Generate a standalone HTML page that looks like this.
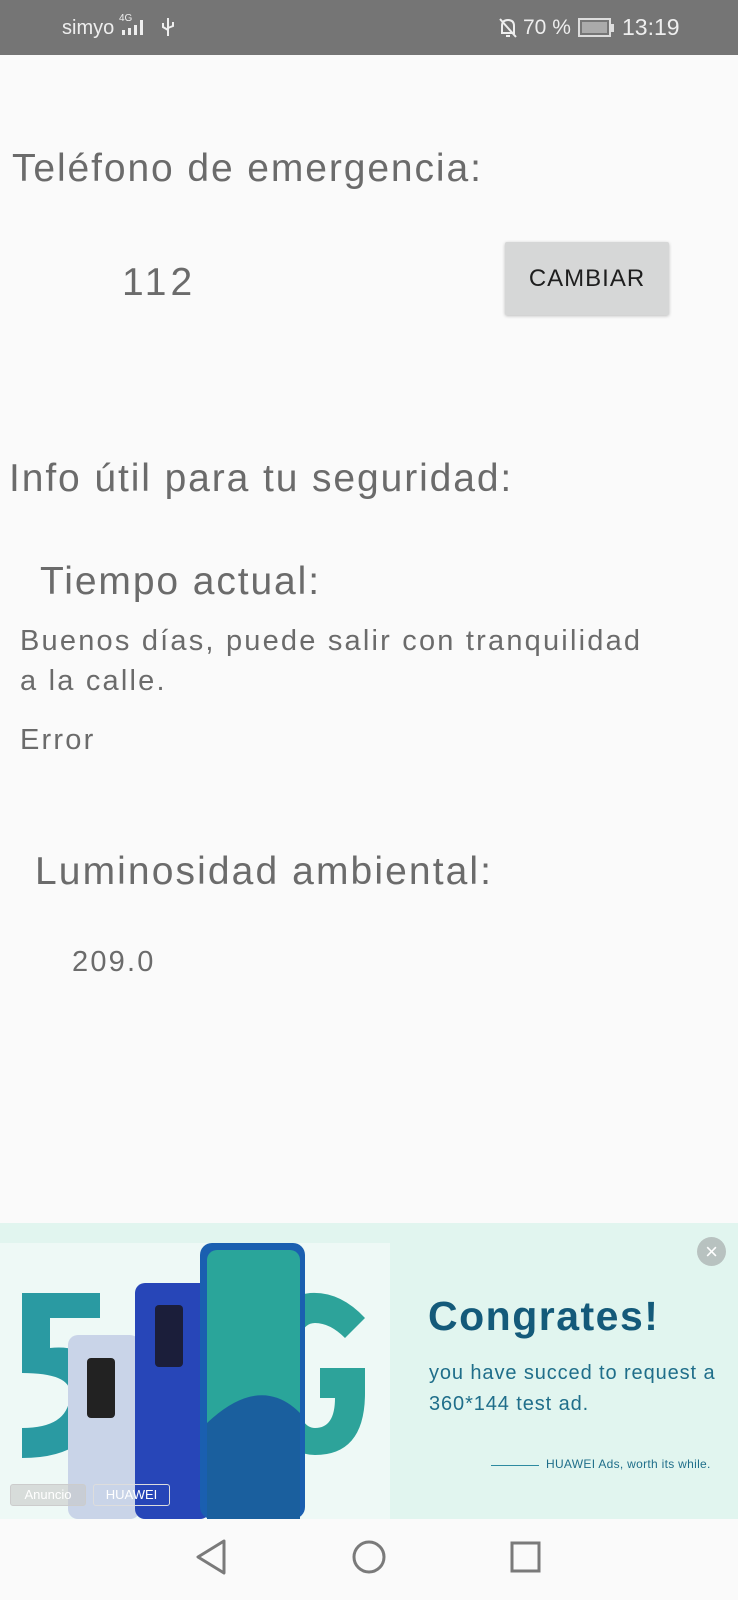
<!DOCTYPE html>
<html><head><meta charset="utf-8">
<style>
*{margin:0;padding:0;box-sizing:border-box}
body{width:738px;height:1600px;background:#fafafa;font-family:"Liberation Sans",sans-serif;position:relative;overflow:hidden;color:#6b6b6b}
.t{position:absolute;white-space:nowrap;line-height:1}
.b{font-size:39px;letter-spacing:1.9px}
.s{font-size:29px;letter-spacing:2.2px}
#sb{position:absolute;left:0;top:0;width:738px;height:55px;background:#757575;color:#eee;font-size:20px}
#ad{position:absolute;left:0;top:1223px;width:738px;height:296px;background:#e1f5ef;overflow:hidden}
#nav{position:absolute;left:0;top:1519px;width:738px;height:81px;background:#fafafa}
</style></head><body>
<div id="sb">
<div class="t" style="left:62px;top:18px">simyo</div>
<div class="t" style="left:119px;top:14px;font-size:10px">4G</div>
<svg style="position:absolute;left:118px;top:16px" width="34" height="22"><rect x="4" y="14" width="3" height="5" fill="#eee"/><rect x="10" y="12" width="3" height="7" fill="#eee"/><rect x="16" y="9" width="3" height="10" fill="#eee"/><rect x="22" y="4" width="3" height="15" fill="#eee"/></svg>
<svg style="position:absolute;left:160px;top:16px" width="16" height="22"><path d="M8 2V20M3 7V11L8 14M13 6V10L8 12" fill="none" stroke="#eee" stroke-width="2"/></svg>
<svg style="position:absolute;left:497px;top:16px" width="22" height="24"><path d="M5 17V10Q5 4 11 4Q17 4 17 10V17H4M9 20H13M3 3L19 21" fill="none" stroke="#eee" stroke-width="2"/></svg>
<div class="t" style="left:523px;top:17px;font-size:21px">70 %</div>
<svg style="position:absolute;left:578px;top:18px" width="38" height="20"><rect x="1" y="1" width="31" height="17" fill="none" stroke="#ddd" stroke-width="2"/><rect x="4" y="4" width="25" height="11" fill="#aaa"/><rect x="33" y="6" width="3" height="8" fill="#ddd"/></svg>
<div class="t" style="left:622px;top:16px;font-size:23px">13:19</div>
</div>

<div class="t b" style="left:12px;top:149px">Teléfono de emergencia:</div>
<div class="t b" style="left:122px;top:263px;letter-spacing:4px">112</div>
<div style="position:absolute;left:505px;top:242px;width:164px;height:73px;background:#d6d7d7;border-radius:2px;box-shadow:0 1px 3px rgba(0,0,0,.25);color:#1e1e1e;font-size:24px;letter-spacing:1px;text-align:center;line-height:73px">CAMBIAR</div>
<div class="t b" style="left:9px;top:459px">Info útil para tu seguridad:</div>
<div class="t b" style="left:40px;top:562px">Tiempo actual:</div>
<div class="t s" style="left:20px;top:627px">Buenos días, puede salir con tranquilidad</div>
<div class="t s" style="left:20px;top:667px">a la calle.</div>
<div class="t s" style="left:20px;top:726px">Error</div>
<div class="t b" style="left:35px;top:852px;letter-spacing:2.1px">Luminosidad ambiental:</div>
<div class="t s" style="left:72px;top:948px">209.0</div>

<div id="ad">
<svg style="position:absolute;left:0;top:0" width="400" height="296">
<rect x="0" y="20" width="390" height="276" fill="#eef9f6"/>
<path d="M22 70 H100 V95 H50 V125 Q100 120 100 170 Q100 235 22 235 V205 Q70 205 70 170 Q70 150 22 150Z" fill="#2a9aa2"/>
<path d="M365 95 Q340 68 310 70 Q265 75 262 150 Q262 230 315 232 Q365 232 365 170 V145 H320 V175 H335 Q335 205 315 205 Q295 205 295 150 Q295 100 315 100 Q330 100 345 115Z" fill="#2da39a"/>
<rect x="68" y="112" width="72" height="184" rx="10" fill="#c9d4e8"/>
<rect x="87" y="135" width="28" height="60" rx="4" fill="#222"/>
<rect x="135" y="60" width="75" height="236" rx="10" fill="#2746b8"/>
<rect x="155" y="82" width="28" height="62" rx="4" fill="#1b1e3a"/>
<rect x="200" y="20" width="105" height="276" rx="12" fill="#1a5fb0"/>
<rect x="207" y="27" width="93" height="269" rx="10" fill="#2aa59a"/>
<path d="M207 200 Q260 150 300 190 V296 H207Z" fill="#1a5f9e"/>
</svg>
<div style="position:absolute;left:10px;top:261px;width:76px;height:22px;border:1px solid #ccc;border-radius:3px;background:rgba(200,200,200,.6);color:#fff;font-size:13px;line-height:20px;text-align:center">Anuncio</div>
<div style="position:absolute;left:93px;top:261px;width:77px;height:22px;border:1px solid #ddd;border-radius:3px;color:#fff;font-size:13px;line-height:20px;text-align:center">HUAWEI</div>
<div style="position:absolute;left:697px;top:14px;width:29px;height:29px;border-radius:50%;background:#b8c2c0;color:#fff;font-size:22px;text-align:center;line-height:29px">×</div>
<div class="t" style="left:428px;top:73px;font-size:41px;font-weight:bold;color:#145a7a;letter-spacing:1.5px">Congrates!</div>
<div class="t" style="left:429px;top:140px;font-size:20px;color:#1f6e8a;letter-spacing:0.9px">you have succed to request a</div>
<div class="t" style="left:429px;top:171px;font-size:20px;color:#1f6e8a;letter-spacing:0.9px">360*144 test ad.</div>
<div style="position:absolute;left:491px;top:242px;width:48px;height:1px;background:#2d8aa0"></div>
<div class="t" style="left:546px;top:235px;font-size:12px;color:#1f6e8a;letter-spacing:0.3px">HUAWEI Ads, worth its while.</div>
</div>

<div id="nav">
<svg style="position:absolute;left:190px;top:16px" width="360" height="44">
<path d="M34 6 L8 22 L34 38Z" fill="none" stroke="#7a7a7a" stroke-width="3" stroke-linejoin="round"/>
<circle cx="179" cy="22" r="15" fill="none" stroke="#7a7a7a" stroke-width="3"/>
<rect x="322" y="8" width="27" height="28" fill="none" stroke="#7a7a7a" stroke-width="3"/>
</svg>
</div>
</body></html>
